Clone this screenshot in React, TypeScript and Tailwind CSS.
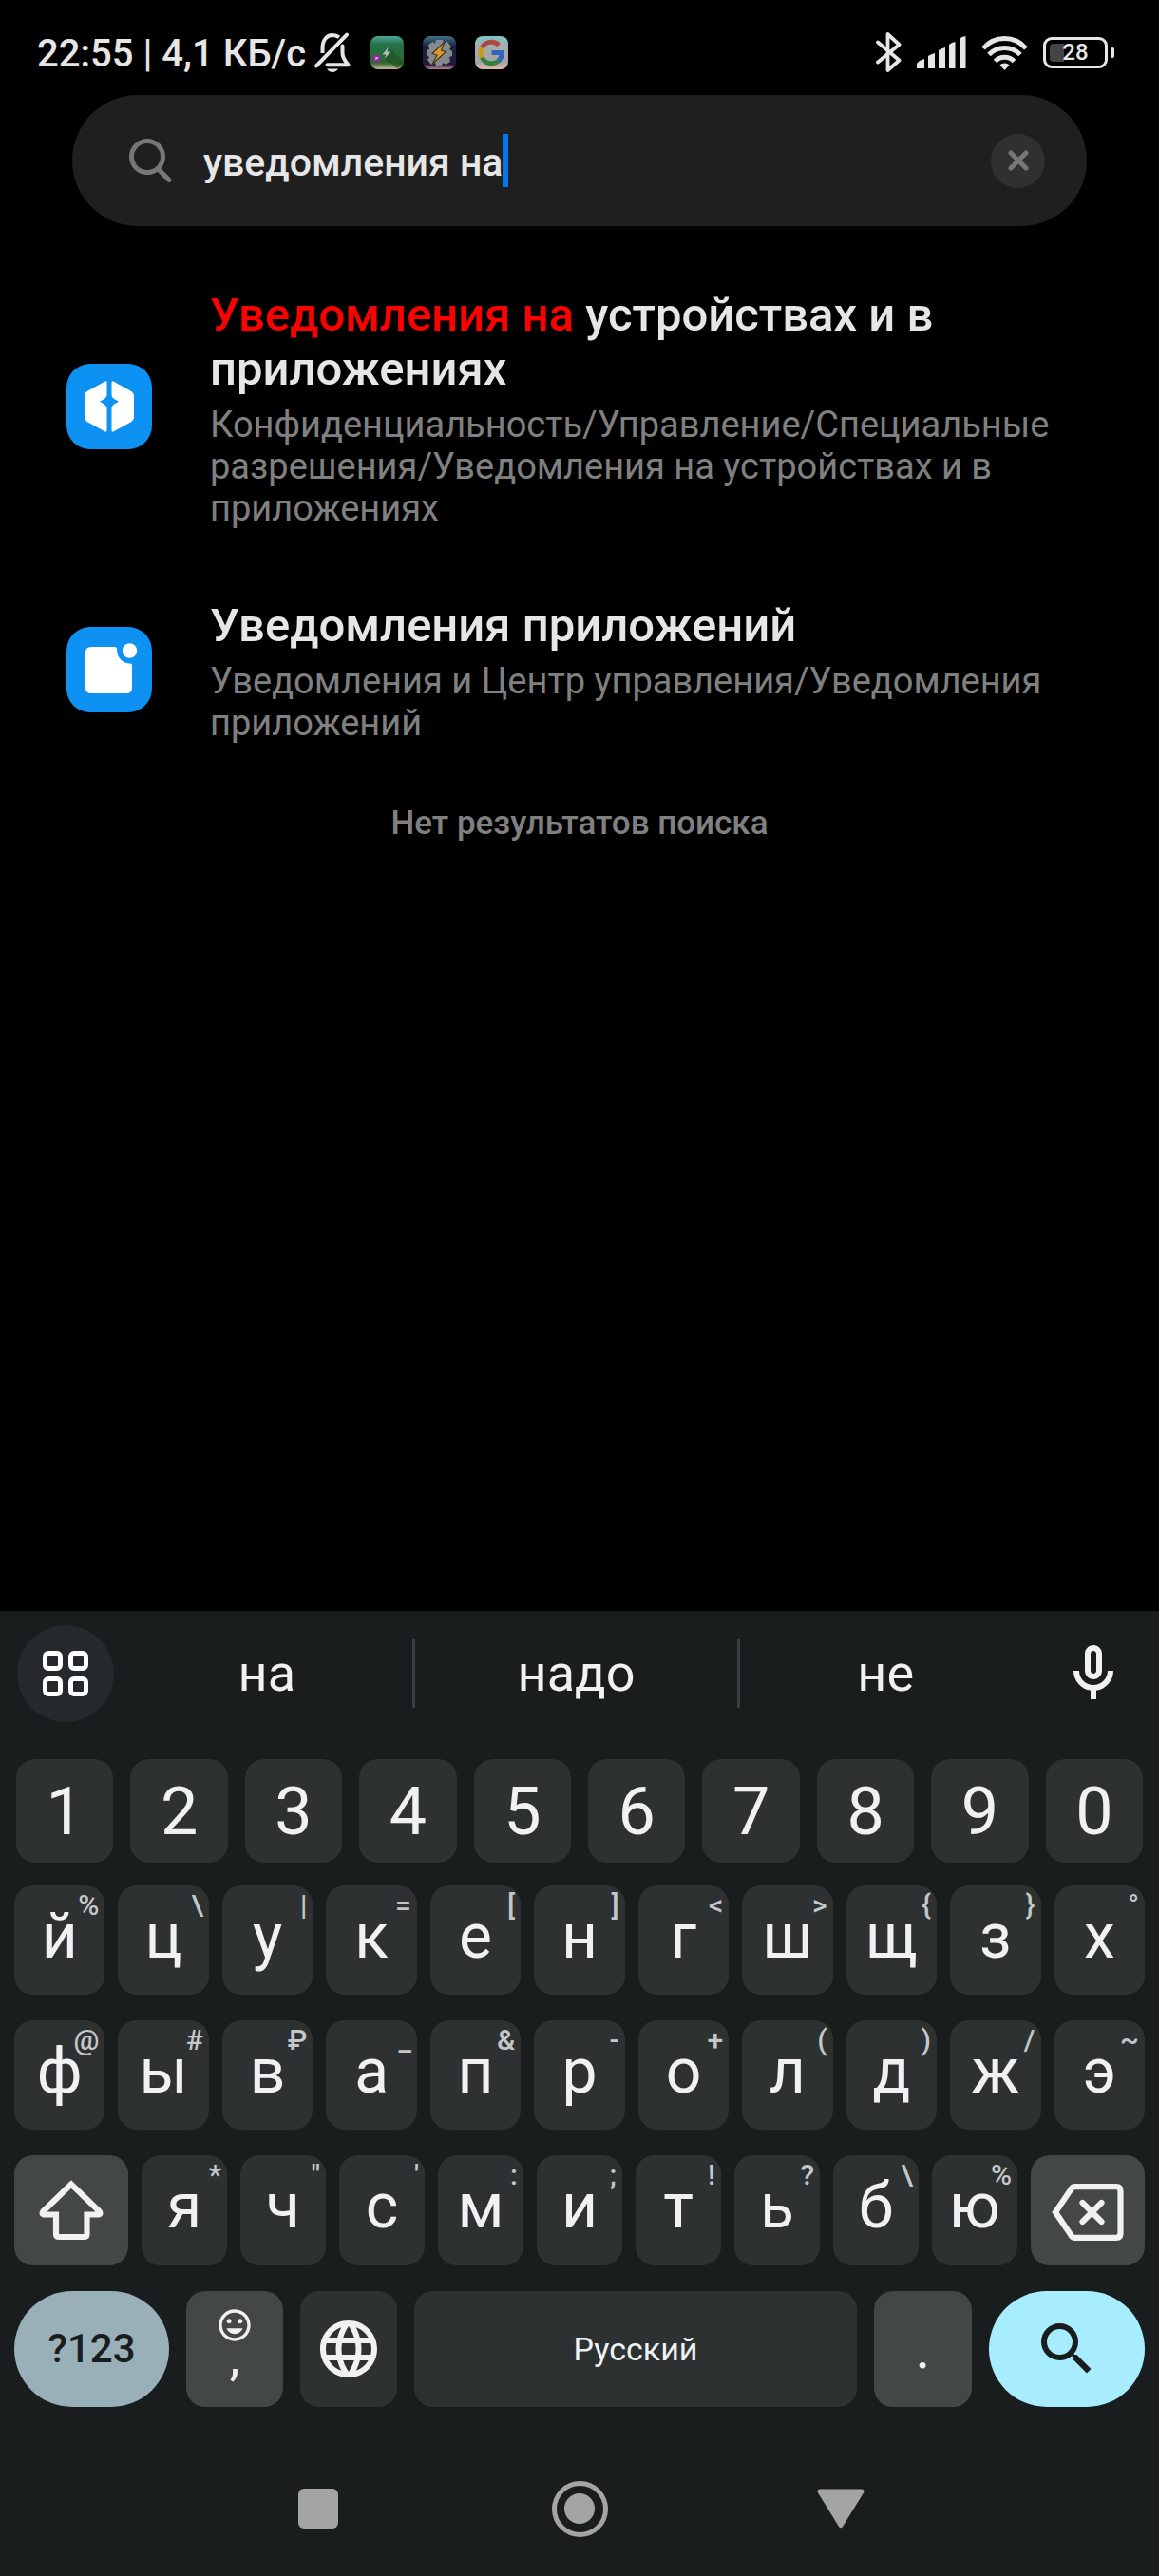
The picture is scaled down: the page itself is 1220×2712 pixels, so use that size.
import type { ReactNode } from "react";
import { MdLanguage, MdOutlineInsertEmoticon, MdSearch } from "react-icons/md";

type KeyDef = [label: string, hint: string];

const numbers = ["1", "2", "3", "4", "5", "6", "7", "8", "9", "0"];
const topRow: KeyDef[] = [
  ["й", "%"], ["ц", "\\"], ["у", "|"], ["к", "="], ["е", "["], ["н", "]"],
  ["г", "<"], ["ш", ">"], ["щ", "{"], ["з", "}"], ["х", "°"],
];
const homeRow: KeyDef[] = [
  ["ф", "@"], ["ы", "#"], ["в", "₽"], ["а", "_"], ["п", "&"], ["р", "-"],
  ["о", "+"], ["л", "("], ["д", ")"], ["ж", "/"], ["э", "~"],
];
const bottomRow: KeyDef[] = [
  ["я", "*"], ["ч", "\""], ["с", "'"], ["м", ":"], ["и", ";"],
  ["т", "!"], ["ь", "?"], ["б", "\\"], ["ю", "%"],
];

function BellOff() {
  return (
    <svg width="40" height="42" viewBox="0 0 40 42" fill="none" stroke="#e6e6e6" strokeWidth="4" strokeLinecap="round" strokeLinejoin="round">
      <path d="M9.5 22v-5C9.500 8 14 3 20 3c3 0 5 .7 7 2.200" strokeLinecap="butt" />
      <path d="M30.500 14.500V22c0 5 3 8.500 6 12.300H14.500" />
      <path d="M3 35.300 35 2.700" />
      <path d="M14 38.500h12c-1.500 2.300-3.500 3.500-6 3.500s-4.500-1.200-6-3.500z" fill="#e6e6e6" stroke="none" />
    </svg>
  );
}

function AppCharge() {
  return (
    <svg width="35" height="35" viewBox="0 0 35 35">
      <defs>
        <linearGradient id="charge" x1="0" y1="0" x2="0" y2="1">
          <stop offset="0" stopColor="#4fa79b" />
          <stop offset=".25" stopColor="#24724a" />
          <stop offset=".8" stopColor="#2c662d" />
          <stop offset="1" stopColor="#c9b795" />
        </linearGradient>
      </defs>
      <rect width="35" height="35" rx="8" fill="url(#charge)" />
      <path d="M19 12 35 27v3L28 34 14 23z" fill="#1f5424" opacity=".7" />
      <path d="M19 11.500 12.500 19.500h4L14.500 24 21.500 16.500h-4z" fill="#b7bdb9" />
      <circle cx="6.500" cy="23.500" r="4" fill="#8b2a9b" />
      <path d="M5.200 22h3v2.300h-1.800l-1.200 1z" fill="#d9a8e0" />
    </svg>
  );
}

function AppGear() {
  return (
    <svg width="35" height="35" viewBox="0 0 35 35">
      <defs>
        <linearGradient id="gear" x1="0" y1="0" x2="0" y2="1">
          <stop offset="0" stopColor="#3f7486" />
          <stop offset=".3" stopColor="#1b2240" />
          <stop offset=".85" stopColor="#251638" />
          <stop offset="1" stopColor="#b58c95" />
        </linearGradient>
      </defs>
      <rect width="35" height="35" rx="8" fill="url(#gear)" />
      <path d="M14 4h7l1 4 4-2 4 5-2 3 3 2v5l-3 1 1 5-5 3-3-2-1 3h-6l-1-3-4 2-4-5 2-3-3-2v-5l3-1-1-5 5-3 2 2z" fill="#858a90" />
      <path d="M23 6 10 18.500l5 1.500-5 9.500 14.500-13-5-1.500z" fill="#d99a2b" stroke="#4a3522" strokeWidth="1.200" />
    </svg>
  );
}

function AppGoogle() {
  return (
    <svg width="35" height="35" viewBox="0 0 35 35" fill="none">
      <defs>
        <linearGradient id="goog" x1="0" y1="0" x2="0" y2="1">
          <stop offset="0" stopColor="#7fc4cb" />
          <stop offset=".3" stopColor="#a5adad" />
          <stop offset=".8" stopColor="#a8a4a4" />
          <stop offset="1" stopColor="#e2bdb0" />
        </linearGradient>
      </defs>
      <rect width="35" height="35" rx="8" fill="url(#goog)" />
      <g strokeWidth="5">
        <path d="M7.200 12.500A11.200 11.200 0 0 1 25.200 9.500" stroke="#b0483f" />
        <path d="M7.200 22.500a11.200 11.200 0 0 1 0-10" stroke="#c79a1e" />
        <path d="M24.700 26A11.200 11.200 0 0 1 7.200 22.500" stroke="#33803f" />
        <path d="M17.500 17.500h11a11.200 11.200 0 0 1-3.800 8.500" stroke="#3264b8" />
      </g>
    </svg>
  );
}

function Bluetooth() {
  return (
    <svg width="27" height="42" viewBox="0 0 27 42" fill="none" stroke="#e6e6e6" strokeWidth="3.800" strokeLinecap="round" strokeLinejoin="round">
      <path d="M2 10.500 24.500 29.500 12.500 40V2l12 11L2 31.500" />
    </svg>
  );
}

function Signal() {
  return (
    <svg width="52" height="34" viewBox="0 0 52 34" fill="#e6e6e6">
      <path d="M0 34v-5q2-3.500 8-5v10zM12 34V21q2-1.500 7-3v16zM23 34V15q2-1.500 7-3v22zM34 34V9q2-2 6.500-3v28zM45 34V3q2-2.500 6.500-3v34z" />
    </svg>
  );
}

function Wifi() {
  return (
    <svg width="49" height="37" viewBox="0 0 49 37" fill="none" stroke="#e6e6e6" strokeWidth="5">
      <path d="M2 14a29.400 29.400 0 0 1 45 0" />
      <path d="M8 20.500a23 23 0 0 1 33 0" />
      <path d="M14.500 27.500a14 14 0 0 1 20 0" />
      <path d="M19.500 31.500c2-2.800 8-2.800 10 0L24.500 37z" fill="#e6e6e6" stroke="none" />
    </svg>
  );
}

function Battery() {
  return (
    <div className="flex items-center gap-[3px]">
      <div className="relative flex h-[33px] w-[68px] items-center justify-center rounded-[9px] border-[3px] border-[#e6e6e6]">
        <span className="absolute top-[4px] left-[4px] h-[19px] w-[15px] rounded-l-[4px] bg-[#444444]" />
        <span className="relative text-[24px] leading-none font-medium">28</span>
      </div>
      <span className="h-[11px] w-1 rounded-sm bg-[#e6e6e6]" />
    </div>
  );
}

function StatusBar() {
  return (
    <header className="flex h-[100px] items-center justify-between pt-[10px] pr-[47px] pl-[39px] text-[#e6e6e6]">
      <div className="flex items-center">
        <span className="pt-1 text-[40px] leading-[48px] font-medium whitespace-nowrap">22:55 | 4,1 КБ/с</span>
        <div className="ml-2 flex items-center gap-5">
          <BellOff />
          <AppCharge />
          <AppGear />
          <AppGoogle />
        </div>
      </div>
      <div className="flex items-center gap-4">
        <Bluetooth />
        <Signal />
        <Wifi />
        <Battery />
      </div>
    </header>
  );
}

function SearchBar() {
  return (
    <form className="mx-[76px] flex h-[138px] items-center rounded-full bg-[#1f1f1f] pr-11 pl-[60px]" role="search">
      <svg className="shrink-0" width="46" height="46" viewBox="0 0 46 46" fill="none" stroke="#777777" strokeWidth="5" strokeLinecap="round">
        <circle cx="19" cy="19" r="16.500" />
        <path d="m30.500 32 11.500 11.500" />
      </svg>
      <div className="ml-8 flex min-w-0 flex-1 items-center">
        <input
          id="query"
          type="text"
          aria-label="Поиск"
          defaultValue="уведомления на"
          className="field-sizing-content bg-transparent pt-1 text-[41px] leading-[50px] font-medium text-[#e6e6e6] outline-none"
        />
        <span className="h-14 w-[6px] bg-[#0078ef]" />
      </div>
      <button type="button" aria-label="Очистить" className="flex size-[57px] items-center justify-center rounded-full bg-[#303030]">
        <svg width="22" height="22" viewBox="0 0 22 22" stroke="#777777" strokeWidth="5" strokeLinecap="round">
          <path d="m3 3 16 16M19 3 3 19" />
        </svg>
      </button>
    </form>
  );
}

function Result({ icon, title, path }: { icon: ReactNode; title: ReactNode; path: string }) {
  return (
    <li>
      <a href="#" className="flex items-center gap-[61px] px-[70px]">
        <span className="mb-1 flex size-[90px] shrink-0 items-center justify-center rounded-[25px] bg-[#0d92f4]">{icon}</span>
        <span className="flex min-w-0 flex-1 flex-col gap-2">
          <span className="text-[49px] leading-[57px] font-medium text-[#e6e6e6]">{title}</span>
          <span className="text-[38px] leading-[44px] text-[#808080]">{path}</span>
        </span>
      </a>
    </li>
  );
}

function PrivacyIcon() {
  return (
    <svg width="52" height="54" viewBox="0 0 52 54" fill="#ffffff">
      <path d="M23.500 2v12.500c0 3.500-3 4.500-7.500 7.200 4.500 2.600 7.500 4 7.500 7.500V52q0 2.500-2.200 1.300L3.500 43.500Q0 41.300 0 38V16q0-3.300 3.500-5.500L21.300.7Q23.500-.5 23.500 2z" />
      <path d="M28.500 2v12.500c0 3.500 3 4.500 7.500 7.200-4.500 2.600-7.500 4-7.500 7.500V52q0 2.500 2.200 1.300l17.800-9.800Q52 41.300 52 38V16q0-3.300-3.500-5.500L30.700.7Q28.500-.5 28.500 2z" />
    </svg>
  );
}

function NotificationIcon() {
  return (
    <svg width="50" height="62" viewBox="0 0 50 62" fill="#ffffff" overflow="visible">
      <path d="M6 7h25q2 0 2 2C33 18.500 39 24.500 47 24.500q2 0 2 2V50q0 6-6 6H6q-6 0-6-6V13q0-6 6-6z" />
      <circle cx="46.500" cy="11" r="7.700" />
    </svg>
  );
}

function LetterKey({ label, hint }: { label: string; hint: string }) {
  return (
    <button type="button" className="relative flex h-full min-w-0 flex-[3] items-center justify-center rounded-[20px] bg-[#2d3132] pb-2 text-[66px] leading-none text-[#eff1f3]">
      {label}
      <span className="absolute top-[5px] right-[6px] text-[30px] leading-[32px] font-medium text-[#c4c7c8]">{hint}</span>
    </button>
  );
}

function Suggestion({ children }: { children: ReactNode }) {
  return <button type="button" className="h-full w-full text-[54px] leading-none text-[#eff1f3]">{children}</button>;
}

function Keyboard() {
  return (
    <section aria-label="Клавиатура" className="bg-[#191d1e] pt-[15px] text-[#eff1f3]">
      <div className="flex h-[102px] items-center pr-[33px] pl-[18px]">
        <button type="button" aria-label="Меню" className="flex size-[102px] shrink-0 items-center justify-center rounded-full bg-[#25292c]">
          <svg width="48" height="48" viewBox="0 0 48 48" fill="none" stroke="#ffffff" strokeWidth="5">
            <rect x="2.500" y="2.500" width="16" height="16" rx="3.500" />
            <rect x="29.500" y="2.500" width="16" height="16" rx="3.500" />
            <rect x="2.500" y="29.500" width="16" height="16" rx="3.500" />
            <rect x="29.500" y="29.500" width="16" height="16" rx="3.500" />
          </svg>
        </button>
        <div className="mr-[30px] ml-2 flex flex-1 items-center">
          <div className="flex-[9]"><Suggestion>на</Suggestion></div>
          <div className="flex h-[72px] flex-[10] items-center border-x-[3px] border-[#3c3f41]"><Suggestion>надо</Suggestion></div>
          <div className="flex-[9]"><Suggestion>не</Suggestion></div>
        </div>
        <button type="button" aria-label="Голосовой ввод" className="shrink-0">
          <svg width="72" height="72" viewBox="0 0 24 24" fill="currentColor">
            <path fillRule="evenodd" d="M12 14c1.660 0 3-1.340 3-3V5c0-1.660-1.340-3-3-3S9 3.340 9 5v6c0 1.660 1.340 3 3 3zm-1-9c0-.55.45-1 1-1s1 .45 1 1v6c0 .55-.45 1-1 1s-1-.45-1-1V5z" />
            <path d="M17 11c0 2.760-2.240 5-5 5s-5-2.240-5-5H5c0 3.530 2.610 6.430 6 6.920V21h2v-3.080c3.390-.49 6-3.390 6-6.920h-2z" />
          </svg>
        </button>
      </div>

      <div className="mt-[39px] flex h-[109px] gap-[18px] px-[17px]">
        {numbers.map((n) => (
          <button key={n} type="button" className="min-w-0 flex-1 rounded-[20px] bg-[#2d3132] text-[70px] leading-none">{n}</button>
        ))}
      </div>

      <div className="mt-6 flex flex-col gap-[27px] px-[15px]">
        <div className="flex h-[115px] gap-[14px]">
          {topRow.map(([label, hint]) => <LetterKey key={label} label={label} hint={hint} />)}
        </div>
        <div className="flex h-[115px] gap-[14px]">
          {homeRow.map(([label, hint]) => <LetterKey key={label} label={label} hint={hint} />)}
        </div>
        <div className="flex h-[116px] gap-[14px]">
          <button type="button" aria-label="Shift" className="flex min-w-0 flex-[4] items-center justify-center rounded-[20px] bg-[#444748]">
            <svg width="68" height="64" viewBox="0 0 68 64" fill="none" stroke="currentColor" strokeWidth="6.200">
              <path d="M34 4.500 4.500 33q-2.500 3.500 2 3.500H18V57q0 3 3 3h26.500q3 0 3-3V36.500h11q4.500 0 2-3.500z" />
            </svg>
          </button>
          {bottomRow.map(([label, hint]) => <LetterKey key={label} label={label} hint={hint} />)}
          <button type="button" aria-label="Удалить" className="flex min-w-0 flex-[4] items-center justify-center rounded-[20px] bg-[#444748] pt-1">
            <svg width="76" height="60" viewBox="0 0 76 60" fill="none" stroke="currentColor" strokeWidth="6.200">
              <path d="M24.500 3.200H68q4.500 0 4.500 4.500v44.600q0 4.500-4.500 4.500H24.500q-2.500 0-4-2.500L4 30 20.500 5.700q1.500-2.500 4-2.500z" />
              <path d="m32.500 20 20 20M52.500 20l-20 20" strokeLinecap="round" />
            </svg>
          </button>
        </div>
        <div className="flex h-[122px] gap-[18px]">
          <button type="button" className="min-w-0 flex-[163] rounded-full bg-[#99b0b8] text-[42px] leading-none font-medium text-[#191d1e]">?123</button>
          <button type="button" aria-label="Запятая, эмодзи" className="flex min-w-0 flex-[102] flex-col items-center rounded-[20px] bg-[#444748] pt-4 text-[54px] leading-[28px]">
            <MdOutlineInsertEmoticon size={40} />
            <span>,</span>
          </button>
          <button type="button" aria-label="Язык" className="flex min-w-0 flex-[102] items-center justify-center rounded-[20px] bg-[#2d3132]">
            <MdLanguage size={72} />
          </button>
          <button type="button" className="min-w-0 flex-[466] rounded-[20px] bg-[#2d3132] text-[34px] leading-none">Русский</button>
          <button type="button" className="min-w-0 flex-[103] rounded-[20px] bg-[#444748] text-[60px] leading-none">.</button>
          <button type="button" aria-label="Найти" className="flex min-w-0 flex-[164] items-center justify-center rounded-full bg-[#a8edff] text-[#191d1e]">
            <MdSearch size={72} />
          </button>
        </div>
      </div>

      <nav className="mx-auto grid h-[178px] max-w-[825px] grid-cols-3 pt-9 text-[#a3a4a6]">
        <button type="button" aria-label="Недавние" className="flex items-center justify-center">
          <span className="size-[42px] rounded-[6px] bg-current" />
        </button>
        <button type="button" aria-label="Домой" className="flex items-center justify-center">
          <span className="flex size-[59px] items-center justify-center rounded-full border-[5px] border-current">
            <span className="size-8 rounded-full bg-current" />
          </span>
        </button>
        <button type="button" aria-label="Назад" className="flex items-center justify-center">
          <svg width="50" height="42" viewBox="0 0 50 42" fill="currentColor" stroke="currentColor" strokeWidth="5" strokeLinejoin="round">
            <path d="M3 3h44L25 38.500z" />
          </svg>
        </button>
      </nav>
    </section>
  );
}

export default function App() {
  return (
    <div className="flex min-h-screen flex-col bg-black font-['Roboto',sans-serif]">
      <StatusBar />
      <SearchBar />
      <main className="flex-1 pt-[65px]">
        <ul className="flex flex-col gap-[73px]">
          <Result
            icon={<PrivacyIcon />}
            title={<><mark className="bg-transparent text-[#ff0000]">Уведомления на</mark> устройствах и в приложениях</>}
            path="Конфиденциальность/Управление/Специальные разрешения/Уведомления на устройствах и в приложениях"
          />
          <Result
            icon={<NotificationIcon />}
            title="Уведомления приложений"
            path="Уведомления и Центр управления/Уведомления приложений"
          />
        </ul>
        <p className="mt-[62px] text-center text-[35px] leading-[44px] font-medium text-[#808080]">Нет результатов поиска</p>
      </main>
      <Keyboard />
    </div>
  );
}
